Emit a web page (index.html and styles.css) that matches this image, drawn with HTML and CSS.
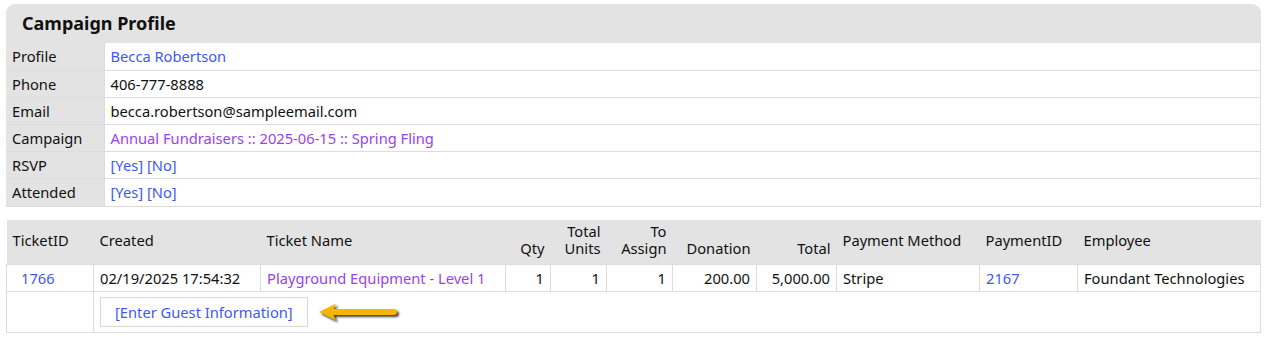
FILE: index.html
```html
<!DOCTYPE html>
<html lang="en">
  <head>
    <meta charset="UTF-8" />
    <title>Campaign Profile</title>
    <link rel="stylesheet" href="styles.css">
  </head>

  <body>
    <div class="panel">
      <h2 class="panel-title">Campaign Profile</h2>
      <table class="profile">
        <tr>
          <th>Profile</th>
          <td><a href="#" class="link">Becca Robertson</a></td>
        </tr>
        <tr>
          <th>Phone</th>
          <td>406-777-8888</td>
        </tr>
        <tr>
          <th>Email</th>
          <td>becca.robertson@sampleemail.com</td>
        </tr>
        <tr>
          <th>Campaign</th>
          <td><a href="#" class="link link--visited">Annual Fundraisers :: 2025-06-15 :: Spring Fling</a></td>
        </tr>
        <tr>
          <th>RSVP</th>
          <td><a href="#" class="link">[Yes]</a> <a href="#" class="link">[No]</a></td>
        </tr>
        <tr class="last-row">
          <th>Attended</th>
          <td><a href="#" class="link">[Yes]</a> <a href="#" class="link">[No]</a></td>
        </tr>
      </table>
    </div>

    <table class="tickets">
      <thead>
        <tr>
          <th class="col-id">TicketID</th>
          <th class="col-created">Created</th>
          <th class="col-name">Ticket Name</th>
          <th class="num col-qty">Qty</th>
          <th class="num col-units">Total<br />Units</th>
          <th class="num col-assign">To<br />Assign</th>
          <th class="num col-donation">Donation</th>
          <th class="num col-total">Total</th>
          <th class="col-method">Payment Method</th>
          <th class="col-payid">PaymentID</th>
          <th>Employee</th>
        </tr>
      </thead>
      <tbody>
        <tr>
          <td class="ticket-id"><a href="#" class="link">1766</a></td>
          <td>02/19/2025 17:54:32</td>
          <td><a href="#" class="link link--visited">Playground Equipment - Level 1</a></td>
          <td class="num">1</td>
          <td class="num">1</td>
          <td class="num">1</td>
          <td class="num">200.00</td>
          <td class="num">5,000.00</td>
          <td>Stripe</td>
          <td><a href="#" class="link">2167</a></td>
          <td>Foundant Technologies</td>
        </tr>
        <tr class="guest-row">
          <td></td>
          <td colspan="10">
            <div class="guest">
              <a href="#" class="guest-btn">[Enter Guest Information]</a>
              <svg class="arrow" viewBox="0 0 80 18" width="80" height="18">
                <path
                  d="M1 9 L18 0.5 L15.5 6 L76 6 Q79 6 79 9 Q79 12 76 12 L15.5 12 L18 17.5 Z"
                  fill="#f6b500"
                />
              </svg>
            </div>
          </td>
        </tr>
      </tbody>
    </table>
  </body>
</html>
```

FILE: styles.css
```css
/* MAIN GREY: #e3e3e3 */
/* BORDER: #dcdcdc */

* {
  margin: 0;
  padding: 0;
  box-sizing: border-box;
}

body {
  font-family: "Noto Sans", "Open Sans", sans-serif;
  font-size: 14.7px;
  color: #111;
  padding: 4px 6px;
}

.link {
  color: #3d5af1;
  text-decoration: none;
}
.link--visited {
  color: #9a3ff0;
}

/* PROFILE PANEL */
.panel {
  border-radius: 9px 9px 0 0;
  overflow: hidden;
  background-color: #e3e3e3;
}
.panel-title {
  font-size: 18px;
  font-weight: 700;
  height: 39px;
  line-height: 39px;
  padding-left: 16px;
  color: #111;
}

.profile {
  width: 100%;
  border-collapse: collapse;
  background-color: #fff;
}
.profile th,
.profile td {
  height: 27px;
  border: 1px solid #dcdcdc;
  text-align: left;
  font-weight: 400;
  padding: 0 6px;
}
.profile th {
  width: 98px;
  background-color: #e3e3e3;
  border-left: none;
  border-right: none;
}
.profile tr:first-child th,
.profile tr:first-child td {
  border-top: none;
}
.profile .last-row th,
.profile .last-row td {
  height: 28px;
}

/* TICKETS */
.tickets {
  width: 100%;
  margin-top: 13px;
  border-collapse: collapse;
}
.tickets th {
  background-color: #e3e3e3;
  font-weight: 400;
  text-align: left;
  height: 45px;
  padding: 2px 6px 4px;
  line-height: 1.2;
}
.tickets th.num {
  text-align: right;
  vertical-align: bottom;
  padding-bottom: 6px;
}
.tickets td {
  border: 1px solid #dcdcdc;
  height: 27px;
  padding: 0 6px;
  white-space: nowrap;
}
.tickets td.num {
  text-align: right;
}
.tickets td.ticket-id {
  padding-left: 14px;
}

.col-id { width: 87px; }
.col-created { width: 167px; }
.col-name { width: 245px; }
.col-qty { width: 45px; }
.col-units { width: 56px; }
.col-assign { width: 66px; }
.col-donation { width: 84px; }
.col-total { width: 80px; }
.col-method { width: 143px; }
.col-payid { width: 98px; }

.guest-row td {
  height: 41px;
}
.guest {
  display: flex;
  align-items: center;
  gap: 10px;
}
.guest-btn {
  color: #3d5af1;
  text-decoration: none;
  border: 1px solid #d6d6d6;
  padding: 0 14px;
  height: 30px;
  line-height: 28px;
}
.arrow {
  filter: drop-shadow(2px 2px 1px rgba(0, 0, 0, 0.75));
}
```
